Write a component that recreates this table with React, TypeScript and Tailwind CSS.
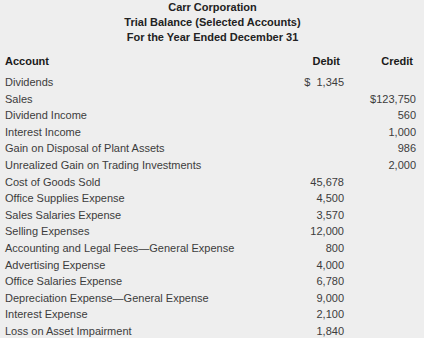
const rows: [string, string, string][] = [
  ["Dividends", "$\u2007 1,345".replace(" ", ""), ""],
  ["Sales", "", "$123,750"],
  ["Dividend Income", "", "560"],
  ["Interest Income", "", "1,000"],
  ["Gain on Disposal of Plant Assets", "", "986"],
  ["Unrealized Gain on Trading Investments", "", "2,000"],
  ["Cost of Goods Sold", "45,678", ""],
  ["Office Supplies Expense", "4,500", ""],
  ["Sales Salaries Expense", "3,570", ""],
  ["Selling Expenses", "12,000", ""],
  ["Accounting and Legal Fees\u2014General Expense", "800", ""],
  ["Advertising Expense", "4,000", ""],
  ["Office Salaries Expense", "6,780", ""],
  ["Depreciation Expense\u2014General Expense", "9,000", ""],
  ["Interest Expense", "2,100", ""],
  ["Loss on Asset Impairment", "1,840", ""],
];

export default function App() {
  return (
    <div className="w-[424px] h-[338px] overflow-hidden bg-[#eeeeee] pl-[5px] pr-[8px] font-['Liberation_Sans',Arial,sans-serif] text-[11px]">
      {/* Heading */}
      <div className="text-center font-bold text-[#222] leading-[15px] pl-[4px]">
        <div>Carr Corporation</div>
        <div>Trial Balance (Selected Accounts)</div>
        <div>For the Year Ended December 31</div>
      </div>

      {/* Column headers */}
      <div className="mt-[8px] mb-[4px] flex font-bold text-[#1a1a1a] leading-[17px]">
        <div className="flex-1">Account</div>
        <div className="w-[60px] text-right pr-[4px]">Debit</div>
        <div className="w-[72px] text-right pr-[3px]">Credit</div>
      </div>

      {/* Account rows */}
      <div className="text-[#3c3c3c] leading-[16.6px]">
        {rows.map(([name, debit, credit]) => (
          <div key={name} className="flex">
            <div className="flex-1 whitespace-nowrap">{name}</div>
            <div className="w-[60px] text-right whitespace-pre">{debit}</div>
            <div className="w-[72px] text-right">{credit}</div>
          </div>
        ))}
      </div>
    </div>
  );
}
